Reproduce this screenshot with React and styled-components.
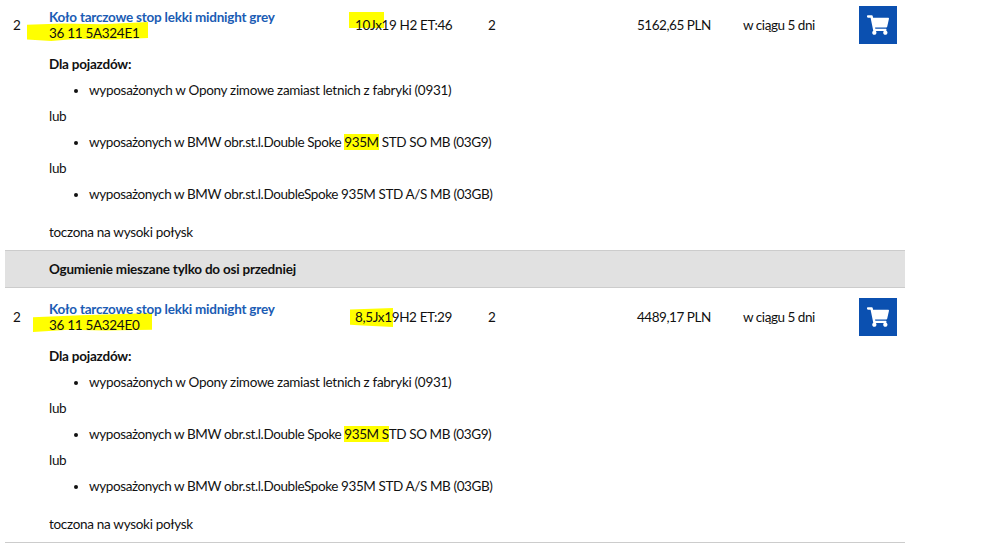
import React from "react";
import styled, { createGlobalStyle } from "styled-components";
import { FaShoppingCart } from "react-icons/fa";

const GlobalStyle = createGlobalStyle`
    html, body {
        margin: 0;
        padding: 0;
        background: #fff;
        overflow: hidden;
    }
    body {
        font-family: Lato, "Liberation Sans", sans-serif;
        font-size: 13.5px;
        letter-spacing: -0.3px;
        line-height: 16px;
        color: #111;
    }
`

const parts = [
    {
        qty: 2,
        name: "Koło tarczowe stop lekki midnight grey",
        code: "36 11 5A324E1",
        size: "10Jx19 H2 ET:46",
        count: 2,
        price: "5162,65 PLN",
        delivery: "w ciągu 5 dni",
        markText: "935M",
        restText: " STD SO MB (03G9)",
        codeStroke: { left: -22, top: 13, width: 121, height: 19, clip: "polygon(0 14%, 30% 8%, 62% 12%, 100% 0, 100% 84%, 70% 92%, 42% 88%, 20% 100%, 0 92%)" },
        sizeStroke: { left: -6, top: -5, width: 35, height: 16, clip: "none" },
    },
    {
        qty: 2,
        name: "Koło tarczowe stop lekki midnight grey",
        code: "36 11 5A324E0",
        size: "8,5Jx19H2 ET:29",
        count: 2,
        price: "4489,17 PLN",
        delivery: "w ciągu 5 dni",
        markText: "935M S",
        restText: "TD SO MB (03G9)",
        codeStroke: { left: -16, top: 12, width: 119, height: 19, clip: "polygon(0 22%, 40% 12%, 100% 0, 100% 88%, 60% 92%, 30% 88%, 0 100%)" },
        sizeStroke: { left: -5, top: -1, width: 43, height: 19, clip: "polygon(0 8%, 100% 0, 100% 100%, 30% 92%, 0 88%)" },
    },
]

const Part = ({ part, first }) => (
    <Row $first={first}>
        <Summary>
            <Qty>{part.qty}</Qty>
            <NameCell>
                <Stroke $s={part.codeStroke} />
                <Name href="#">{part.name}</Name>
                <Code>{part.code}</Code>
            </NameCell>
            <Cell>
                <Stroke $s={part.sizeStroke} />
                <Label>{part.size}</Label>
            </Cell>
            <Cell><Label>{part.count}</Label></Cell>
            <Cell $tight><Label>{part.price}</Label></Cell>
            <Cell $tight><Label>{part.delivery}</Label></Cell>
            <CartButton aria-label="Do koszyka"><FaShoppingCart size={22} color="#fff" /></CartButton>
        </Summary>
        <Details>
            <Heading>Dla pojazdów:</Heading>
            <Fit><li>wyposażonych w Opony zimowe zamiast letnich z fabryki (0931)</li></Fit>
            <Para>lub</Para>
            <Fit $tight><li>wyposażonych w BMW obr.st.l.Double Spoke <Mark>{part.markText}</Mark>{part.restText}</li></Fit>
            <Para>lub</Para>
            <Fit $tight><li>wyposażonych w BMW obr.st.l.DoubleSpoke 935M STD A/S MB (03GB)</li></Fit>
            <Note>toczona na wysoki połysk</Note>
        </Details>
    </Row>
)

const App = () => (
    <Page>
        <GlobalStyle />
        <Part part={parts[0]} first />
        <Band>Ogumienie mieszane tylko do osi przedniej</Band>
        <Part part={parts[1]} />
        <Rule />
    </Page>
)

const Page = styled.div`
    width: 900px;
    margin-left: 5px;
`

const Row = styled.div`
    padding-top: ${(p) => (p.$first ? "6px" : "10px")};
`

const Summary = styled.div`
    display: grid;
    grid-template-columns: 44px 306px 133px 149px 106px 116px 38px;
    height: 38px;
`

const Qty = styled.div`
    padding-left: 8px;
    align-self: center;
    margin-top: -1px;
`

const NameCell = styled.div`
    position: relative;
    align-self: center;
`

const Name = styled.a`
    position: relative;
    display: block;
    color: #1b5cb4;
    font-weight: 700;
    letter-spacing: -0.22px;
    text-decoration: none;
`

const Code = styled.div`
    position: relative;
`

const Cell = styled.div`
    position: relative;
    align-self: center;
    letter-spacing: ${(p) => (p.$tight ? "-0.46px" : "-0.36px")};
`

const Label = styled.span`
    position: relative;
`

const Stroke = styled.div`
    position: absolute;
    left: ${(p) => p.$s.left}px;
    top: ${(p) => p.$s.top}px;
    width: ${(p) => p.$s.width}px;
    height: ${(p) => p.$s.height}px;
    clip-path: ${(p) => p.$s.clip};
    background: #ffff00;
`

const CartButton = styled.button`
    width: 38px;
    height: 38px;
    padding: 0;
    border: 0;
    background: #0b50b0;
    display: flex;
    align-items: center;
    justify-content: center;
`

const Details = styled.div`
    padding: 12px 0 0 44px;
`

const Para = styled.p`
    margin: 0 0 10px;
`

const Heading = styled(Para)`
    font-weight: 700;
    letter-spacing: -0.22px;
`

const Fit = styled.ul`
    margin: 0 0 10px;
    padding-left: 40px;
    letter-spacing: ${(p) => (p.$tight ? "-0.4px" : "-0.3px")};
`

const Note = styled(Para)`
    margin: 22px 0 10px;
`

const Mark = styled.span`
    background: #ffff00;
`

const Band = styled.div`
    height: 36px;
    line-height: 36px;
    padding-left: 44px;
    background: #e1e1e1;
    border-top: 1px solid #ccc;
    border-bottom: 1px solid #ccc;
    font-weight: 700;
    letter-spacing: -0.22px;
`

const Rule = styled.div`
    border-top: 1px solid #ccc;
`

export default App;
